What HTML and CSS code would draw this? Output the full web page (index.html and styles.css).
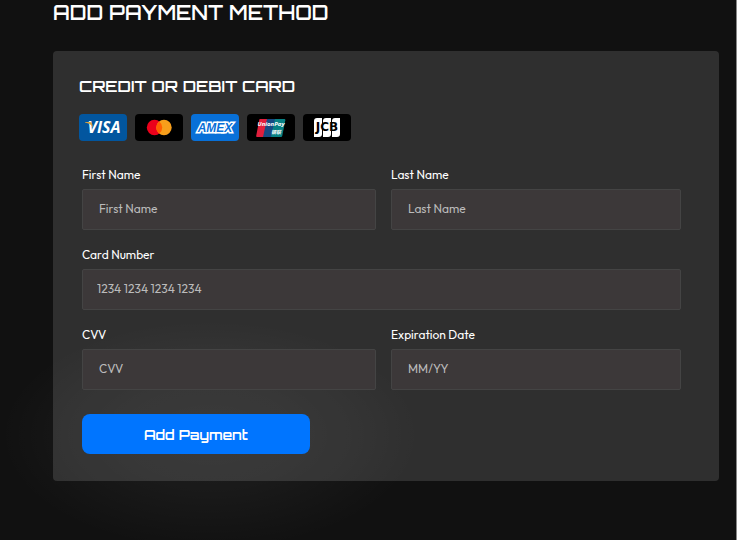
FILE: index.html
```html
<!DOCTYPE html>
<html lang="en">
    <head>
        <meta charset="UTF-8" />
        <title>Add Payment Method</title>
        <link rel="stylesheet" href="styles.css">
    </head>
    <body>
        <main class="page">
            <h1>ADD PAYMENT METHOD</h1>
            <section class="card">
                <h2>CREDIT OR DEBIT CARD</h2>
                <div class="brands">
                    <svg class="brand" viewBox="0 0 48 27" role="img" aria-label="Visa">
                        <rect width="48" height="27" rx="4" fill="#02569f" />
                        <text x="25" y="19" text-anchor="middle" class="brand_text visa">VISA</text>
                        <path d="M6 8h5q1.500 0 2 1.500l1 4q-2-4-8-5z" fill="#d9a441" />
                    </svg>
                    <svg class="brand" viewBox="0 0 48 27" role="img" aria-label="Mastercard">
                        <rect width="48" height="27" rx="4" fill="#000" />
                        <circle cx="19.500" cy="13.500" r="7.700" fill="#eb001b" />
                        <circle cx="29" cy="13.500" r="7.700" fill="#f79e1b" />
                        <path d="M24.250 7.400a7.700 7.700 0 0 1 0 12.200a7.700 7.700 0 0 1 0-12.200z" fill="#ff5f00" />
                    </svg>
                    <svg class="brand" viewBox="0 0 48 27" role="img" aria-label="American Express">
                        <rect width="48" height="27" rx="4" fill="#0870d8" />
                        <text x="24" y="18" text-anchor="middle" class="brand_text amex">AMEX</text>
                    </svg>
                    <svg class="brand" viewBox="0 0 48 27" role="img" aria-label="UnionPay">
                        <rect width="48" height="27" rx="4" fill="#000" />
                        <path d="M13 5h8l-4 18H10q-1 0-.8-1.200l3-15.500Q12.300 5 13 5z" fill="#e01f3d" />
                        <path d="M20 5h10l-4 18H16z" fill="#164a82" />
                        <path d="M28 5h9.500q1 0 .8 1.200l-3 15.600Q35 23 34 23H24z" fill="#088184" />
                        <text x="24" y="12" text-anchor="middle" class="brand_text union">UnionPay</text>
                        <text x="29" y="20" text-anchor="middle" class="brand_text union_cn">银联</text>
                    </svg>
                    <svg class="brand" viewBox="0 0 48 27" role="img" aria-label="JCB">
                        <rect width="48" height="27" rx="4" fill="#000" />
                        <path d="M14 4h5v16q0 3-3 3h-5V7q0-3 3-3zM23 4h5v16q0 3-3 3h-5V7q0-3 3-3zM32 4h5v16q0 3-3 3h-5V7q0-3 3-3z" fill="#fff" />
                        <text x="24" y="17" text-anchor="middle" class="brand_text jcb">JCB</text>
                    </svg>
                </div>
                <form class="payment_form">
                    <div class="field">
                        <label for="first_name">First Name</label>
                        <input id="first_name" type="text" placeholder="First Name" />
                    </div>
                    <div class="field">
                        <label for="last_name">Last Name</label>
                        <input id="last_name" type="text" placeholder="Last Name" />
                    </div>
                    <div class="field wide">
                        <label for="card_number">Card Number</label>
                        <input id="card_number" type="text" inputmode="numeric" placeholder="1234 1234 1234 1234" />
                    </div>
                    <div class="field">
                        <label for="cvv">CVV</label>
                        <input id="cvv" type="text" inputmode="numeric" placeholder="CVV" />
                    </div>
                    <div class="field">
                        <label for="expiration">Expiration Date</label>
                        <input id="expiration" type="text" placeholder="MM/YY" />
                    </div>
                    <button class="submit" type="button">Add Payment</button>
                </form>
            </section>
        </main>
    </body>
</html>
```
FILE: styles.css
```css
* {
    box-sizing: border-box;
}

body {
    margin: 0;
    background: #111;
    color: #fff;
    font-family: Gilroy, Outfit, Urbanist, Inter, sans-serif;
    font-size: 12px;
}

.page {
    min-height: 100vh;
    padding: 1px 17px 58px 53px;
    border-right: 1px solid #888;
    background: radial-gradient(210px 115px at 210px 435px, rgba(255, 255, 255, 0.05), rgba(255, 255, 255, 0.04) 45%, transparent);
}

h1, h2, .submit {
    font-family: Orbitron, "DejaVu Sans", sans-serif;
    font-weight: 600;
}

h1 {
    margin: 0 0 26px;
    font-size: 20px;
    line-height: 24px;
}

h2 {
    margin: 0 0 18px;
    font-size: 16px;
    line-height: 20px;
}

.card {
    padding: 25px 38px 27px 26px;
    border-radius: 4px;
    background: rgba(255, 255, 255, 0.13);
}

.brands {
    display: flex;
    gap: 8px;
    margin-bottom: 26px;
}

.brand {
    width: 48px;
    height: 27px;
}

.brand_text {
    fill: #fff;
    font-family: "Open Sans", sans-serif;
    font-weight: bold;
    font-style: italic;
}

.visa {
    font-size: 16px;
}

.amex {
    font-family: "Liberation Sans", sans-serif;
    font-size: 12px;
    fill: #0870d8;
    stroke: #fff;
    stroke-width: 3px;
    paint-order: stroke;
}

.union {
    font-size: 6px;
}

.union_cn {
    font-family: "Noto Sans CJK SC", sans-serif;
    font-size: 5px;
}

.jcb {
    font-family: "DejaVu Sans", sans-serif;
    font-size: 12px;
    font-style: normal;
    fill: #000;
}

.payment_form {
    display: grid;
    grid-template-columns: 294fr 290fr;
    gap: 17px 15px;
    padding-left: 3px;
}

.field {
    display: flex;
    flex-direction: column;
    gap: 6px;
    min-width: 0;
}

.wide {
    grid-column: 1 / -1;
}

.field label {
    line-height: 16px;
}

.field input {
    width: 100%;
    height: 41px;
    padding: 0 16px 3px;
    border: 1px solid #444;
    border-radius: 2px;
    background: #3c3839;
    color: #fff;
    font: inherit;
}

.wide input {
    padding-left: 14px;
}

.field input::placeholder {
    color: #bbb;
    opacity: 1;
}

.submit {
    width: 228px;
    height: 40px;
    margin-top: 7px;
    border: 0;
    border-radius: 8px;
    background: #0075ff;
    color: #fff;
    font-size: 14px;
}
```
